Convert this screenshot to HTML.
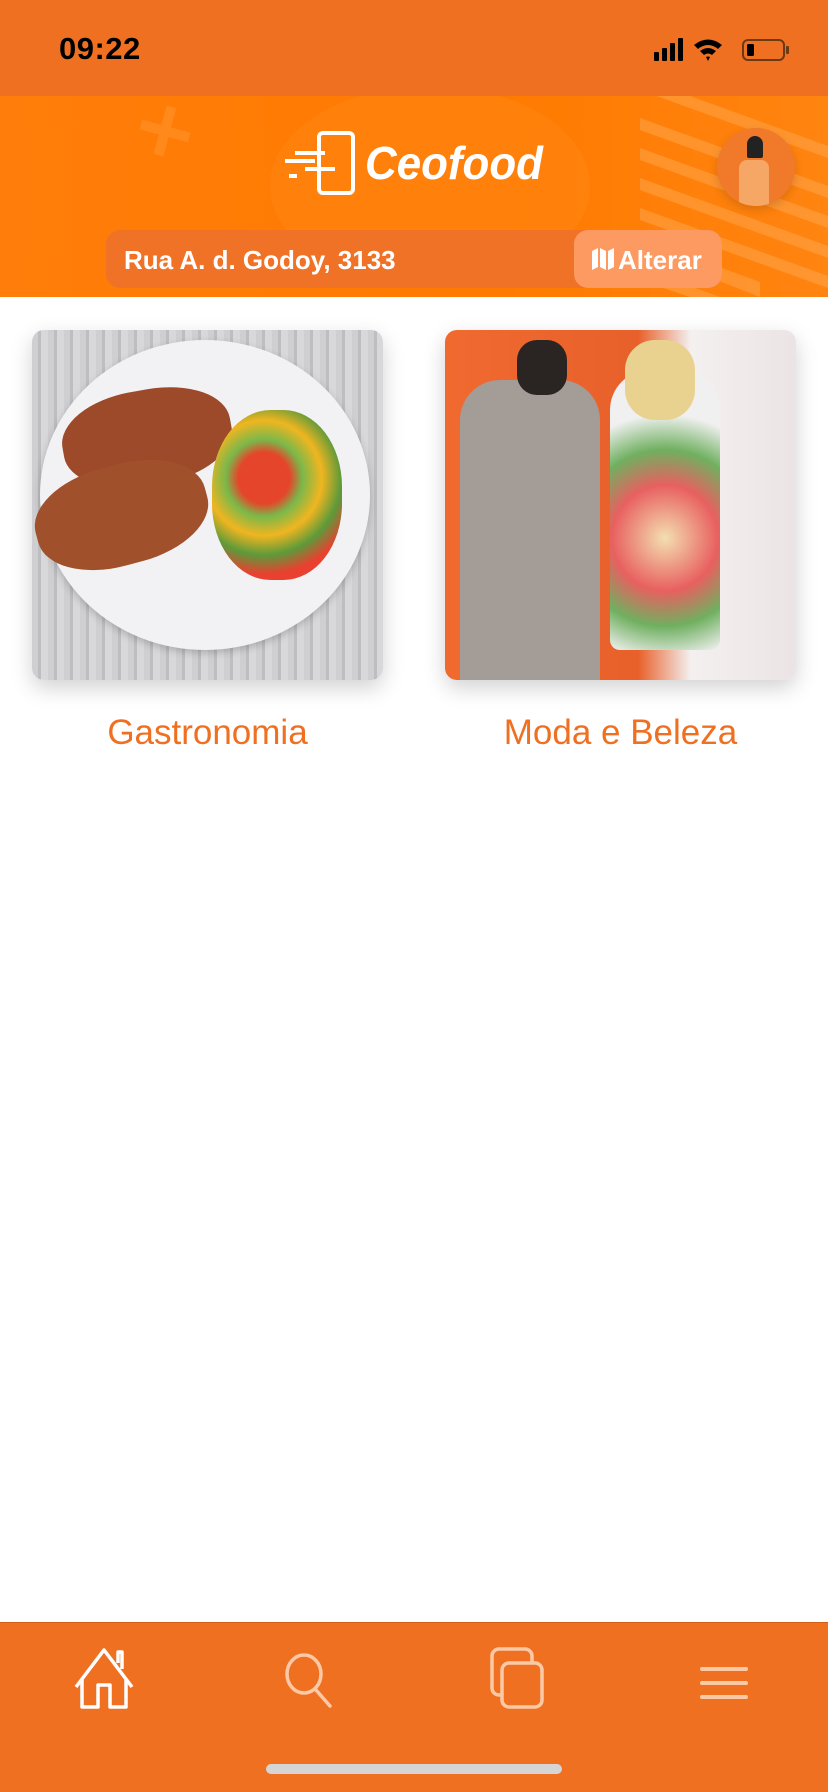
<!DOCTYPE html>
<html><head><meta charset="utf-8"><style>
*{margin:0;padding:0;box-sizing:border-box}
body{width:828px;height:1792px;background:#fff;font-family:"Liberation Sans",sans-serif;position:relative;overflow:hidden}
.status{position:absolute;left:0;top:0;width:828px;height:96px;background:#f07022}
.time{position:absolute;left:59px;top:31px;font-size:31px;font-weight:600;color:#000;letter-spacing:0.5px}
.header{position:absolute;left:0;top:96px;width:828px;height:201px;background:linear-gradient(90deg,#ff7d0a,#ff7a00 60%,#ff8410);overflow:hidden}
.addr{position:absolute;left:106px;top:230px;width:616px;height:58px;background:#f07226;border-radius:14px}
.addr span{position:absolute;left:18px;top:15px;color:#fff;font-size:26px;font-weight:700}
.alt{position:absolute;left:574px;top:230px;width:148px;height:58px;background:#fd9a62;border-radius:14px;color:#fff;font-size:26px;font-weight:700;padding:15px 0 0 44px}
.card{position:absolute;top:330px;width:351px;height:350px;border-radius:12px;box-shadow:0 8px 22px rgba(0,0,0,0.18);overflow:hidden}
.lbl{position:absolute;top:713px;font-size:35px;color:#f07022;text-align:center;width:351px}
.nav{position:absolute;left:0;top:1622px;width:828px;height:170px;background:#f07022;border-top:1px solid #d35e15}
.hi{position:absolute;left:266px;top:1764px;width:296px;height:10px;border-radius:5px;background:#d5d5d5}
</style></head><body>
<div class="status"><div class="time">09:22</div>
<svg style="position:absolute;left:652px;top:36px" width="140" height="28" viewBox="0 0 140 28">
<rect x="2" y="16" width="5" height="9" rx="1"/><rect x="10" y="12" width="5" height="13" rx="1"/><rect x="18" y="7" width="5" height="18" rx="1"/><rect x="26" y="2" width="5" height="23" rx="1"/>
<path d="M42 9 Q56 -2 70 9 L66 13 Q56 5 46 13Z M48 15 Q56 9 64 15 L60 19 Q56 16 52 19Z M54 21 L56 25 L58 21 Q56 20 54 21Z"/>
<rect x="91" y="4" width="41" height="20" rx="5" fill="none" stroke="#6b3a15" stroke-width="2"/><rect x="95" y="8" width="7" height="12" rx="1.5"/><rect x="134" y="10" width="3" height="8" rx="1" fill="#6b3a15"/>
</svg></div>
<div class="header">
<svg width="828" height="201" style="position:absolute;left:0;top:0">
<ellipse cx="430" cy="90" rx="160" ry="100" fill="#ff8c1e" opacity="0.35"/>
<g fill="#ff9a35" opacity="0.45"><rect x="160" y="10" width="10" height="50" transform="rotate(15 165 35)"/><rect x="140" y="30" width="50" height="10" transform="rotate(15 165 35)"/></g>
<g fill="#ffa850" opacity="0.5">
<polygon points="640,0 690,0 828,50 828,62 640,-6"/>
<polygon points="640,22 828,90 828,102 640,34"/>
<polygon points="640,52 828,120 828,132 640,64"/>
<polygon points="640,82 828,150 828,162 640,94"/>
<polygon points="640,112 828,180 828,192 640,124"/>
<polygon points="640,142 760,186 760,201 640,154"/>
<polygon points="640,172 720,201 690,201 640,184"/>
</g>
</svg>
<svg style="position:absolute;left:285px;top:35px" width="300" height="65" viewBox="0 0 300 65">
<rect x="34" y="2" width="34" height="60" rx="4" fill="none" stroke="#fff" stroke-width="4"/>
<g stroke="#fff" stroke-width="4"><line x1="0" y1="30" x2="30" y2="30"/><line x1="10" y1="22" x2="40" y2="22"/><line x1="20" y1="38" x2="50" y2="38"/><line x1="4" y1="45" x2="12" y2="45"/></g>
<text x="80" y="48" fill="#fff" font-size="46" font-weight="700" font-style="italic" font-family="Liberation Sans" textLength="178" lengthAdjust="spacingAndGlyphs">Ceofood</text>
</svg>
<div style="position:absolute;left:717px;top:32px;width:78px;height:78px;border-radius:50%;background:#f07a2a;box-shadow:0 4px 10px rgba(0,0,0,0.15);overflow:hidden">
<div style="position:absolute;left:30px;top:8px;width:16px;height:22px;background:#222;border-radius:8px 8px 2px 2px"></div>
<div style="position:absolute;left:22px;top:32px;width:30px;height:46px;background:#f7a765;border-radius:8px 8px 0 0"></div></div>
</div>
<div class="addr"><span>Rua A. d. Godoy, 3133</span></div>
<div class="alt"><svg style="position:absolute;left:17px;top:17px" width="24" height="24" viewBox="0 0 24 24" fill="#fff"><path d="M1 4 L7 1 V20 L1 23Z M9 1 L15 4 V23 L9 20Z M17 4 L23 1 V20 L17 23Z"/></svg>Alterar</div>
<div class="card" style="left:32px;background:repeating-linear-gradient(90deg,#cfcfd2 0 6px,#bdbec2 6px 9px,#d8d8da 9px 16px)">
<div style="position:absolute;left:8px;top:10px;width:330px;height:310px;border-radius:50%;background:#f2f2f4;box-shadow:0 3px 8px rgba(0,0,0,0.2)"></div>
<div style="position:absolute;left:30px;top:60px;width:170px;height:95px;border-radius:45%;background:#9c4a2a;transform:rotate(-10deg)"></div>
<div style="position:absolute;left:2px;top:135px;width:175px;height:100px;border-radius:45%;background:#a1502c;transform:rotate(-15deg)"></div>
<div style="position:absolute;left:180px;top:80px;width:130px;height:170px;border-radius:45%;background:radial-gradient(circle at 40% 40%,#e5452a 0 20%,#7ab84a 30%,#f0b520 45%,#5d9a3a 60%,#e94030 75%)"></div>
</div>
<div class="lbl" style="left:32px">Gastronomia</div>
<div class="card" style="left:445px;background:linear-gradient(90deg,#f06a30 0,#e8602a 55%,#f4f0f0 70%,#ece4e4 100%)">
<div style="position:absolute;left:15px;top:50px;width:140px;height:300px;background:#a49c96;border-radius:40px 40px 0 0"></div>
<div style="position:absolute;left:72px;top:10px;width:50px;height:55px;background:#2a2522;border-radius:20px"></div>
<div style="position:absolute;left:165px;top:40px;width:110px;height:280px;background:radial-gradient(circle at 50% 60%,#f3dfb0,#e86060 30%,#70b060 50%,#f0f0f0 70%);border-radius:40px 40px 10px 10px"></div>
<div style="position:absolute;left:180px;top:10px;width:70px;height:80px;background:#e9d290;border-radius:30px"></div>
</div>
<div class="lbl" style="left:445px">Moda e Beleza</div>
<div class="nav">
<svg style="position:absolute;left:74px;top:24px" width="60" height="62" viewBox="0 0 60 62" fill="none" stroke="#fff" stroke-width="3.5" stroke-linejoin="round"><path d="M2 40 L30 3 L58 40 M8 33 V60 H24 V38 H36 V60 H52 V33 M44 16 V5 H48 V22"/></svg>
<svg style="position:absolute;left:284px;top:29px" width="52" height="56" viewBox="0 0 52 56" fill="none" stroke="#fcc9a6" stroke-width="3.5"><ellipse cx="20" cy="22" rx="17" ry="19"/><path d="M32 38 L46 54" stroke-linecap="round"/></svg>
<svg style="position:absolute;left:490px;top:24px" width="56" height="62" viewBox="0 0 56 62" fill="none" stroke="#fcc9a6" stroke-width="3.5"><rect x="2" y="2" width="40" height="46" rx="7"/><rect x="12" y="16" width="40" height="44" rx="7" fill="#f07022"/></svg>
<svg style="position:absolute;left:700px;top:43px" width="48" height="34" viewBox="0 0 48 34" stroke="#fcc9a6" stroke-width="4" stroke-linecap="round"><line x1="2" y1="3" x2="46" y2="3"/><line x1="2" y1="17" x2="46" y2="17"/><line x1="2" y1="31" x2="46" y2="31"/></svg>
</div>
<div class="hi"></div>
</body></html>
